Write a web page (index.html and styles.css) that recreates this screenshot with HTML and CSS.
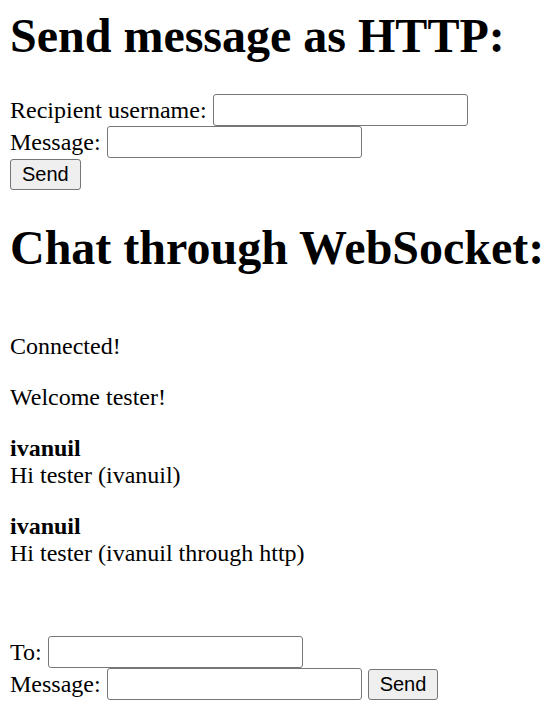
FILE: index.html
```html
<!DOCTYPE html>
<html>
<head>
<meta charset="utf-8">
<link rel="stylesheet" href="styles.css">
</head>
<body>
<h1 class="title title-http">Send message as HTTP:</h1>
<form class="http-form">
  <div class="row">Recipient username: <input class="field" type="text"></div>
  <div class="row">Message: <input class="field" type="text"></div>
  <div class="row"><button class="btn" type="button">Send</button></div>
</form>
<h1 class="title title-ws">Chat through WebSocket:</h1>
<div class="messages">
  <p class="msg">Connected!</p>
  <p class="msg">Welcome tester!</p>
  <p class="msg"><b>ivanuil</b><br>Hi tester (ivanuil)</p>
  <p class="msg"><b>ivanuil</b><br>Hi tester (ivanuil through http)</p>
</div>
<form class="ws-form">
  <div class="row">To: <input class="field" type="text"></div>
  <div class="row">Message: <input class="field" type="text"><button class="btn btn-inline" type="button">Send</button></div>
</form>
</body>
</html>
```
FILE: styles.css
```css
html, body {
  background: #ffffff;
}
body {
  margin: 0 10px;
  font-family: "Liberation Serif", "Times New Roman", serif;
  font-size: 24px;
  color: #000000;
  overflow: hidden;
}
.title {
  font-size: 48px;
  font-weight: bold;
  margin: 0;
  line-height: 55px;
}
.title-http {
  padding-top: 8px;
}
.http-form {
  margin-top: 31px;
}
.row {
  height: 32px;
  display: flex;
  align-items: center;
  white-space: pre;
}
.field {
  box-sizing: border-box;
  width: 255px;
  height: 32px;
  margin: 0;
  padding: 2px 3px;
  border: 1px solid #767676;
  border-radius: 3px;
  font-family: "Liberation Sans", Arial, sans-serif;
  font-size: 20px;
  background: #ffffff;
}
.btn {
  box-sizing: border-box;
  height: 31px;
  margin: 0;
  padding: 0 11px;
  border: 1px solid #767676;
  border-radius: 3px;
  background: #efefef;
  font-family: "Liberation Sans", Arial, sans-serif;
  font-size: 20px;
  color: #000000;
  line-height: 1;
}
.btn-inline {
  margin-left: 6px;
}
.title-ws {
  margin-top: 30px;
}
.messages {
  margin-top: 58px;
  margin-bottom: 69px;
}
.msg {
  margin: 0 0 24px 0;
  line-height: 27px;
}
.ws-form {
  margin: 0;
}
```
